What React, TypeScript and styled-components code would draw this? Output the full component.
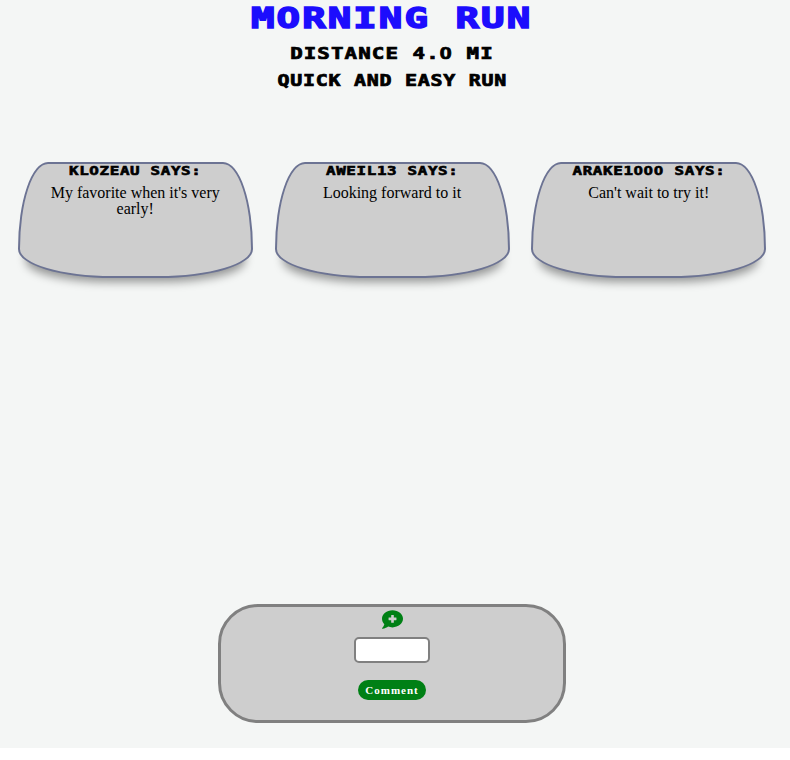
import React from "react";
import styled, { createGlobalStyle } from "styled-components";
import { FaCommentMedical } from "react-icons/fa";

const GlobalStyle = createGlobalStyle`
  body { margin: 0; background: #fff; }
  *, *::before, *::after { box-sizing: border-box; }
`;

const Page = styled.main`
  display: flex;
  flex-direction: column;
  align-items: center;
  height: 748px;
  padding-right: 6px;
  background: #f4f6f5;
  font-family: "Liberation Serif", serif;
  color: #000;
`;

const Display = styled.div<{
  $size: number;
  $line: number;
  $scale: number;
  $stroke: number;
  $spacing: number;
}>`
  font-family: "DejaVu Sans Mono", monospace;
  font-weight: 700;
  font-size: ${(p) => p.$size}px;
  line-height: ${(p) => p.$line}px;
  letter-spacing: ${(p) => p.$spacing}px;
  text-transform: uppercase;
  white-space: pre;
  transform: scaleX(${(p) => p.$scale});
  -webkit-text-stroke: ${(p) => p.$stroke}px currentColor;
`;

const Zero = styled.span`
  font-family: "Liberation Sans", sans-serif;
  font-size: 1.03em;
  line-height: 1;
  letter-spacing: calc(0.03em + 0.5px);
`;

const Title = styled(Display)`
  margin: 1px 0 0;
  color: #1c0dfd;
`;

const Header = styled.header`
  display: flex;
  flex-direction: column;
  align-items: center;
  height: 162px;
`;

const Cards = styled.section`
  display: grid;
  grid-template-columns: repeat(3, 235px);
  column-gap: 21.8px;
  height: 442px;
  align-items: start;
`;

const Card = styled.article`
  display: flex;
  flex-direction: column;
  align-items: center;
  height: 116px;
  padding: 0 24px;
  border: 2px solid #6c7393;
  border-radius: 30px 30px 94px 94px / 87px 87px 29px 29px;
  background: #cecece;
  box-shadow: 0 12px 10px -8px rgba(0, 0, 0, 0.4);
`;

const Message = styled.p`
  margin: 7px 0 0;
  font-size: 16px;
  line-height: 16px;
  text-align: center;
`;

const Form = styled.form`
  display: flex;
  flex-direction: column;
  align-items: center;
  width: 348px;
  height: 119px;
  padding-top: 2px;
  border: 3px solid #808080;
  border-radius: 40px;
  background: #cecece;
`;

const Icon = styled(FaCommentMedical)`
  display: block;
  width: 21px;
  height: 21px;
  color: #008015;
`;

const Input = styled.input`
  width: 76px;
  height: 26px;
  margin: 7px 0 17px;
  border: 2px solid #808080;
  border-radius: 5px;
  background: #fff;
`;

const Button = styled.button`
  width: 68px;
  height: 20px;
  padding: 0;
  border: 0;
  border-radius: 10px;
  background: #008015;
  color: #fff;
  font: 700 11px/20px "Liberation Serif", serif;
  letter-spacing: 1px;
`;

const comments = [
  { user: "klozeau", text: "My favorite when it's very early!" },
  { user: "aweil13", text: "Looking forward to it" },
  { user: "arake1000", text: "Can't wait to try it!" },
];

const plainZeros = (text: string) =>
  text.split(/(0)/).map((part, i) => (part === "0" ? <Zero key={i}>0</Zero> : part));

export default function App() {
  return (
    <>
      <GlobalStyle />
      <Page>
        <Header>
          <Title as="h1" $size={28.5} $line={35} $scale={1.37} $stroke={1.5} $spacing={1.5}>
            Morning Run
          </Title>
          <Display $size={15.5} $line={36} $scale={1.34} $stroke={0.7} $spacing={0.82}>
            {plainZeros("Distance 4.0 mi")}
          </Display>
          <Display $size={15} $line={18} $scale={1.33} $stroke={0.7} $spacing={0.56}>
            Quick and easy run
          </Display>
        </Header>
        <Cards>
          {comments.map((c) => (
            <Card key={c.user}>
              <Display $size={12} $line={14} $scale={1.32} $stroke={0.6} $spacing={0.5}>
                {plainZeros(`${c.user} says:`)}
              </Display>
              <Message>{c.text}</Message>
            </Card>
          ))}
        </Cards>
        <Form onSubmit={(e) => e.preventDefault()}>
          <Icon />
          <Input aria-label="Comment" />
          <Button type="submit">Comment</Button>
        </Form>
      </Page>
    </>
  );
}
